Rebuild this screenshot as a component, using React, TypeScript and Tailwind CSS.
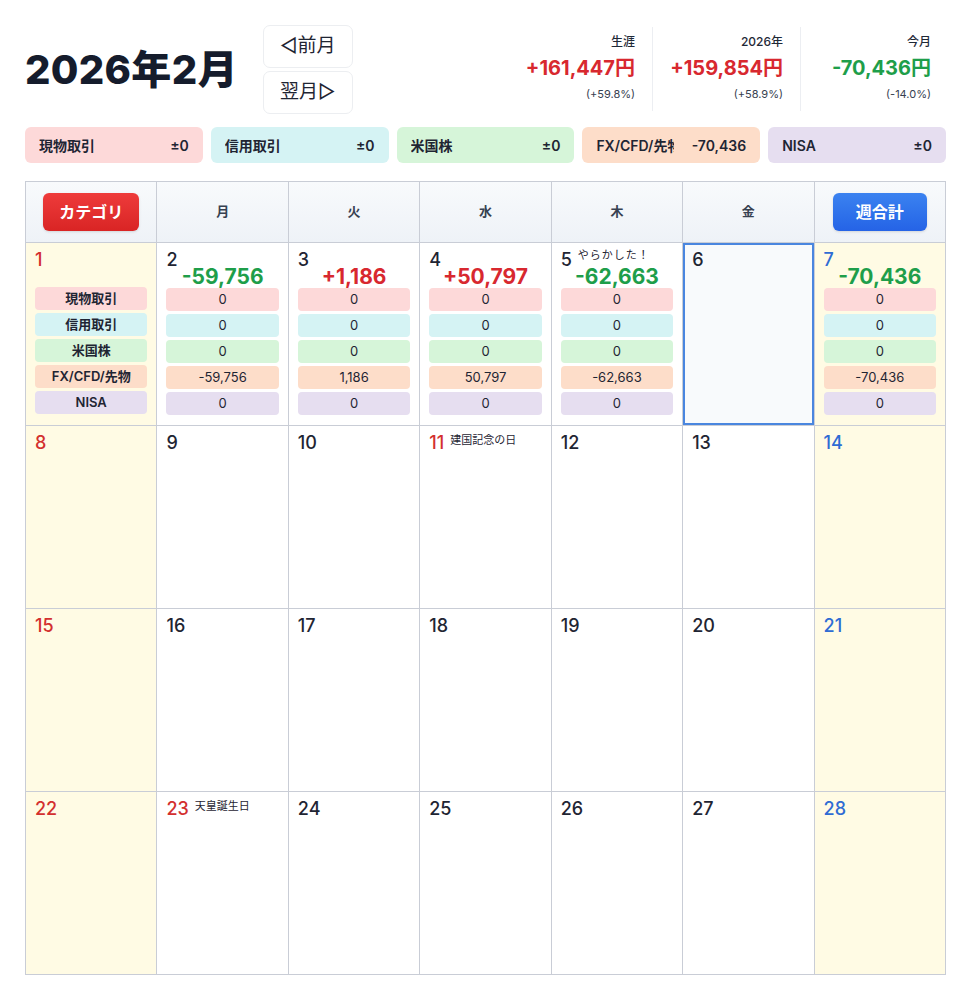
import React from 'react'

type Cat = { name: string; bg: string }

const cats: Cat[] = [
  { name: '現物取引', bg: 'bg-[#fdd9d9]' },
  { name: '信用取引', bg: 'bg-[#d5f3f4]' },
  { name: '米国株', bg: 'bg-[#d6f5d9]' },
  { name: 'FX/CFD/先物', bg: 'bg-[#fdddc9]' },
  { name: 'NISA', bg: 'bg-[#e6def0]' },
]

type Day = {
  d: number
  memo?: string
  holiday?: string
  total?: number
  values?: number[]
  today?: boolean
}

const weeks: Day[][] = [
  [
    { d: 1 },
    { d: 2, total: -59756, values: [0, 0, 0, -59756, 0] },
    { d: 3, total: 1186, values: [0, 0, 0, 1186, 0] },
    { d: 4, total: 50797, values: [0, 0, 0, 50797, 0] },
    { d: 5, memo: 'やらかした！', total: -62663, values: [0, 0, 0, -62663, 0] },
    { d: 6, today: true },
    { d: 7, total: -70436, values: [0, 0, 0, -70436, 0] },
  ],
  [{ d: 8 }, { d: 9 }, { d: 10 }, { d: 11, holiday: '建国記念の日' }, { d: 12 }, { d: 13 }, { d: 14 }],
  [{ d: 15 }, { d: 16 }, { d: 17 }, { d: 18 }, { d: 19 }, { d: 20 }, { d: 21 }],
  [{ d: 22 }, { d: 23, holiday: '天皇誕生日' }, { d: 24 }, { d: 25 }, { d: 26 }, { d: 27 }, { d: 28 }],
]

const fmt = (n: number) => n.toLocaleString('en-US')
const signed = (n: number) => (n > 0 ? '+' : '') + fmt(n)

function Stat({ label, value, pct, up, first }: { label: string; value: string; pct: string; up: boolean; first?: boolean }) {
  return (
    <div className={`w-[148px] h-[84px] pr-[17px] flex flex-col items-end ${first ? '' : 'border-l border-[#eceef2]'}`}>
      <div className="mt-[9px] text-[12px] font-medium text-[#1f2937] leading-none">{label}</div>
      <div className={`mt-[10px] text-[20px] font-bold leading-none ${up ? 'text-[#d8282f]' : 'text-[#1e9e4a]'}`}>{value}</div>
      <div className="mt-[11px] text-[11px] text-[#374151] leading-none">{pct}</div>
    </div>
  )
}

function DayCell({ day, col }: { day: Day; col: number }) {
  const weekend = col === 0 || col === 6
  const numColor =
    col === 0 || day.holiday ? 'text-[#d3302f]' : col === 6 ? 'text-[#2f6cd4]' : 'text-[#1f2533]'
  const bg = weekend ? 'bg-[#fffbe4]' : day.today ? 'bg-[#f8fafc]' : 'bg-white'
  const isLabelCol = col === 0 && day.d === 1
  return (
    <div
      className={`h-[183px] border-r border-b border-[#c9cdd6] ${bg} ${
        day.today ? 'shadow-[inset_0_0_0_2px_#4a86df]' : ''
      } px-[9px] pt-[8px]`}
    >
      <div className="flex items-start h-[18px]">
        <span className={`text-[18px] leading-[18px] font-medium ${numColor}`}>{day.d}</span>
        {day.holiday && <span className="ml-[6px] mt-[1px] text-[11px] leading-none text-[#1f2533]">{day.holiday}</span>}
        {day.memo && <span className="ml-[6px] -mt-[1px] text-[11px] leading-none tracking-[1px] text-[#1f2533]">{day.memo}</span>}
      </div>
      {day.total !== undefined && (
        <div
          className={`-mt-[3px] text-center text-[21px] font-bold leading-[21px] ${
            day.total > 0 ? 'text-[#d8282f]' : 'text-[#1e9e4a]'
          }`}
        >
          {signed(day.total)}
        </div>
      )}
      {isLabelCol && <div className="h-[17px]" />}
      {(day.values || isLabelCol) && (
        <div className="mt-[1px] flex flex-col gap-[3px]">
          {cats.map((c, i) => (
            <div
              key={c.name}
              className={`h-[23px] rounded-[4px] ${c.bg} flex items-center justify-center text-[13px] text-[#1f2533] ${
                isLabelCol ? 'font-semibold' : ''
              }`}
            >
              {isLabelCol ? c.name : fmt(day.values![i])}
            </div>
          ))}
        </div>
      )}
    </div>
  )
}

export default function App() {
  const heads = ['月', '火', '水', '木', '金']
  return (
    <div
      className="w-[972px] min-h-[1000px] bg-white"
      style={{ fontFamily: 'Inter, "Noto Sans CJK JP", sans-serif' }}
    >
      <div className="px-[25px] pt-[25px]">
        {/* title, month navigation, totals */}
        <div className="flex items-center h-[89px]">
          <h1 className="text-[40px] font-extrabold leading-none text-[#151c2c] tracking-[0.3px]">2026年2月</h1>
          <div className="ml-[25px] flex flex-col gap-[3px]">
            <button className="w-[90px] h-[43px] border border-[#eceef1] rounded-[7px] text-[19px] text-[#1f2533] bg-white">
              ◁前月
            </button>
            <button className="w-[90px] h-[43px] border border-[#eceef1] rounded-[7px] text-[19px] text-[#1f2533] bg-white">
              翌月▷
            </button>
          </div>
          <div className="ml-auto flex mr-[-1px] self-start mt-[2px]">
            <Stat first label="生涯" value="+161,447円" pct="(+59.8%)" up />
            <Stat label="2026年" value="+159,854円" pct="(+58.9%)" up />
            <Stat label="今月" value="-70,436円" pct="(-14.0%)" up={false} />
          </div>
        </div>

        {/* per-category totals */}
        <div className="mt-[13px] grid grid-cols-5 gap-[8px] w-[921px]">
          {cats.map((c) => (
            <div key={c.name} className={`h-[36px] rounded-[6px] ${c.bg} flex items-center px-[14px] text-[14px] font-semibold text-[#1f2533]`}>
              <span className="flex-1 min-w-0 overflow-hidden whitespace-nowrap">{c.name}</span>
              <span className="shrink-0 w-[72px] text-right">{c.name.startsWith('FX') ? '-70,436' : '±0'}</span>
            </div>
          ))}
        </div>

        {/* calendar */}
        <div className="mt-[18px] w-[921px] grid grid-cols-7 border-l border-t border-[#c9cdd6]">
          <div className="h-[61px] border-r border-b border-[#c9cdd6] bg-gradient-to-b from-[#f8fafc] to-[#eef2f7] flex items-center justify-center">
            <span className="w-[96px] h-[38px] rounded-[6px] bg-gradient-to-b from-[#ee3b3b] to-[#d92424] text-white text-[16px] font-bold flex items-center justify-center shadow-sm">
              カテゴリ
            </span>
          </div>
          {heads.map((h) => (
            <div
              key={h}
              className="h-[61px] border-r border-b border-[#c9cdd6] bg-gradient-to-b from-[#f8fafc] to-[#eef2f7] flex items-center justify-center text-[13px] font-semibold text-[#374151]"
            >
              {h}
            </div>
          ))}
          <div className="h-[61px] border-r border-b border-[#c9cdd6] bg-gradient-to-b from-[#f8fafc] to-[#eef2f7] flex items-center justify-center">
            <span className="w-[94px] h-[38px] rounded-[6px] bg-gradient-to-b from-[#3b82f0] to-[#2563e6] text-white text-[16px] font-bold flex items-center justify-center shadow-sm">
              週合計
            </span>
          </div>
          {weeks.map((w) => w.map((day, i) => <DayCell key={day.d} day={day} col={i} />))}
        </div>
      </div>
    </div>
  )
}
